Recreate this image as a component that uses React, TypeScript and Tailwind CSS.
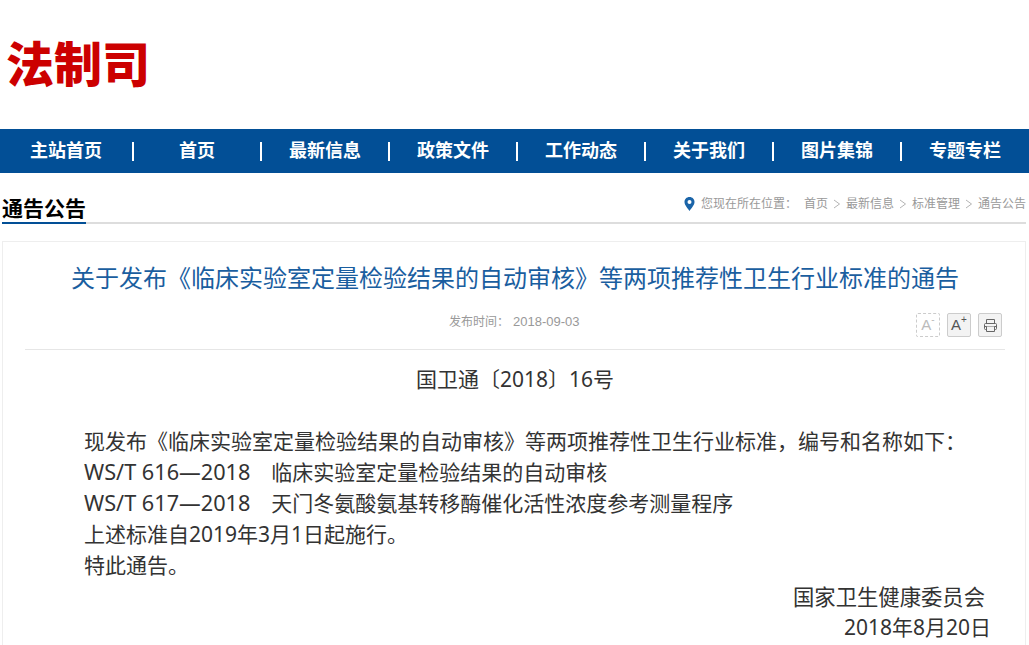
import React from 'react';

const cjk = "font-['Liberation_Sans','Noto_Sans_CJK_SC',sans-serif]";

const navItems = ['主站首页', '首页', '最新信息', '政策文件', '工作动态', '关于我们', '图片集锦', '专题专栏'];
const crumbs = ['首页', '最新信息', '标准管理', '通告公告'];

function PinIcon() {
  return (
    <svg width="11" height="14" viewBox="0 0 11 14" className="mr-[6px]">
      <path d="M5.5 0C2.5 0 .5 2.2.5 5c0 3.2 3.4 6.6 5 9 1.6-2.4 5-5.8 5-9 0-2.8-2-5-5-5z" fill="#1a64a8" />
      <circle cx="5.5" cy="5" r="2" fill="#fff" />
    </svg>
  );
}

function Chevron() {
  return (
    <svg width="18" height="10" viewBox="0 0 18 10" fill="none" stroke="#aaaaaa" strokeWidth="0.9">
      <path d="M6 1l5.5 4L6 9" />
    </svg>
  );
}

function PrintIcon() {
  return (
    <svg width="15" height="15" viewBox="0 0 15 15" fill="none" stroke="#666" strokeWidth="1">
      <path d="M3.5 6V1.5h8V6" />
      <rect x="1.5" y="5.5" width="12" height="6" rx="1" />
      <path d="M1.5 8.5h12" />
      <path d="M3.5 8.5v5h8v-5" fill="#f3f3f3" />
    </svg>
  );
}

export default function App() {
  return (
    <div className={`${cjk} w-[1029px] h-[645px] overflow-hidden bg-white`}>
      <div className="h-[129px] pl-[6px] pt-[34px]">
        <h1 className="text-[48px] leading-[64px] font-black text-[#cc0000]">法制司</h1>
      </div>

      <nav className="h-[44px] bg-[#024f96] flex pl-[2px]">
        {navItems.map((item, i) => (
          <div key={item} className="w-[128px] flex items-center relative first:w-[131px] first:pr-[3px]">
            <span className="flex-1 text-center text-white font-bold text-[18px] leading-[46px]">{item}</span>
            {i < navItems.length - 1 && <span className="absolute right-[-1px] w-[2px] h-[19px] bg-white top-[13px]" />}
          </div>
        ))}
      </nav>

      <div className="h-[51px] mx-[2px] w-[1024px] flex items-end justify-between border-b-2 border-[#dddddd]">
        <div className="text-[21px] leading-[26px] font-bold text-black border-b-2 border-[#024f96] -mb-[2px] h-[28px]">通告公告</div>
        <div className="flex items-center text-[12px] text-[#999999] h-[20px] mb-[8px]">
          <PinIcon />
          <span className="w-[103px]">您现在所在位置：</span>
          {crumbs.map((c, i) => (
            <span key={c} className="flex items-center">
              {i > 0 && <Chevron />}
              {c}
            </span>
          ))}
        </div>
      </div>

      <div className="mt-[17px] mx-[2px] w-[1024px] h-[500px] border border-[#eeeeee] pl-[22px] pr-[20px]">
        <h2 className="pt-[21px] text-center text-[24px] leading-[32px] text-[#1a5e9f]">
          关于发布《临床实验室定量检验结果的自动审核》等两项推荐性卫生行业标准的通告
        </h2>
        <div className="mt-[17px] h-[38px] flex items-start justify-end border-b border-[#e6e6e6] relative">
          <span className="absolute left-[424px] top-[1px] text-[12px] leading-[18px] text-[#999999]">
            发布时间：<span className="text-[13px] ml-[4px]">2018-09-03</span>
          </span>
          <div className="flex gap-[7px] pr-[3px] mt-[1px]">
            <span className="w-[24px] h-[24px] border border-dashed border-[#cccccc] rounded-[2px] flex items-center justify-center text-[15px] font-light text-[#bbbbbb]">A<sup className="text-[10px]">-</sup></span>
            <span className="w-[24px] h-[24px] border border-[#cccccc] bg-[#f3f3f3] rounded-[2px] flex items-center justify-center text-[15px] text-[#555555]">A<sup className="text-[10px]">+</sup></span>
            <span className="w-[24px] h-[24px] border border-[#cccccc] bg-[#f3f3f3] rounded-[2px] flex items-center justify-center"><PrintIcon /></span>
          </div>
        </div>
        <div className="text-[21px] leading-[31px] text-[#333333] font-['Noto_Sans','Noto_Sans_CJK_SC',sans-serif]">
          <p className="mt-[14px] mb-[31px] text-center">国卫通〔2018〕16号</p>
          <div className="pl-[59px]">
            <p>现发布《临床实验室定量检验结果的自动审核》等两项推荐性卫生行业标准，编号和名称如下：</p>
            <p><span className="text-[21.7px] leading-none">WS/T 616—2018</span>　临床实验室定量检验结果的自动审核</p>
            <p><span className="text-[21.7px] leading-none">WS/T 617—2018</span>　天门冬氨酸氨基转移酶催化活性浓度参考测量程序</p>
            <p>上述标准自2019年3月1日起施行。</p>
            <p>特此通告。</p>
          </div>
          <p className="text-right pr-[20px] text-[21.33px]">国家卫生健康委员会</p>
          <p className="text-right pr-[14px]">2018年8月20日</p>
        </div>
      </div>
    </div>
  );
}
